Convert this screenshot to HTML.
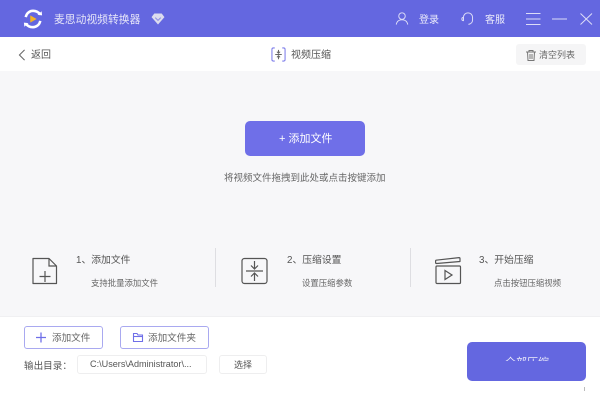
<!DOCTYPE html>
<html><head><meta charset="utf-8">
<style>
html,body{margin:0;padding:0}
body{width:600px;height:405px;overflow:hidden;position:relative;background:#fff;font-family:"Liberation Sans","Noto Sans CJK SC",sans-serif;color:#555}
#w{position:absolute;left:0;top:0;width:600px;height:405px;filter:blur(.3px)}
.t{position:absolute;white-space:nowrap;line-height:14px}
.a{position:absolute;box-sizing:border-box}
svg{position:absolute;overflow:visible}
</style></head><body><div id="w">
<div class="a" style="left:0;top:0;width:600px;height:37px;background:#6467e0"></div>
<div class="a" style="left:0;top:71px;width:600px;height:246px;background:#f7f7f9"></div>
<div class="a" style="left:0;top:316px;width:600px;height:1px;background:#f0f0f2"></div>

<svg style="left:23px;top:8px" width="20" height="22" viewBox="0 0 22 24" fill="none">
<path d="M3 10 C4 5 8 3 11 3 C14 3 17 4.500 19 7" stroke="#fff" stroke-width="2.800"/>
<path d="M19 14 C18 19 14 21 11 21 C8 21 5 20 3 17" stroke="#fff" stroke-width="2.800"/>
<path d="M16 7.500 L21 8 L20.500 3.500Z M6 16.500 L1 16 L1.500 20.500Z" fill="#fff"/>
<path d="M8 8 L15 12 L8 16Z" fill="#f5b324"/>
</svg>
<div class="t" style="left:54px;top:13px;font-size:10.800px;color:#e6e6f8">麦思动视频转换器</div>
<svg style="left:151px;top:13px" width="14" height="12" viewBox="0 0 15 13"><path d="M3.500 0.500H11.500L14.500 4.500L7.500 12.500L0.500 4.500Z" fill="#dcdcee"/><path d="M4.500 5L7.500 8L10.500 5" stroke="#8f90e4" stroke-width="1.200" fill="none"/></svg>

<svg style="left:395px;top:12px" width="14" height="13" viewBox="0 0 17 16" fill="none" stroke="#dcdcf7" stroke-width="1.200"><circle cx="8.500" cy="5" r="4"/><path d="M1.500 15.500C2 11.500 5 9.500 8.500 9.500C12 9.500 15 11.500 15.500 15.500"/></svg>
<div class="t" style="left:419px;top:14px;font-size:10px;color:#ebebfa">登录</div>
<svg style="left:461px;top:12px" width="14" height="14" viewBox="0 0 17 17" fill="none" stroke="#dcdcf7" stroke-width="1.200"><path d="M3 9V6.500C3 3.500 5.500 1 8.500 1C11.500 1 14 3.500 14 6.500V10C14 12.500 12 14.500 9 15"/><path d="M3 6.500C1.500 6.500 1 7.500 1 8.500C1 9.500 1.500 10.500 3 10.500Z"/></svg>
<div class="t" style="left:485px;top:14px;font-size:10px;color:#ebebfa">客服</div>
<svg style="left:526px;top:13px" width="66" height="12" viewBox="0 0 66 12" fill="none" stroke="#dcdcf7" stroke-width="1"><path d="M0 .5H14.500M0 6H14.500M0 11.500H14.500"/><path d="M26 6H41"/><path d="M54.500 .5L66 11.500M66 .5L54.500 11.500"/></svg>

<svg style="left:18px;top:49px" width="8" height="12" viewBox="0 0 9 14" fill="none" stroke="#666" stroke-width="1.200"><path d="M7.500 1L1.500 7L7.500 13"/></svg>
<div class="t" style="left:31px;top:49px;font-size:10px;color:#555">返回</div>

<svg style="left:271px;top:47px" width="15" height="15" viewBox="0 0 15 16" fill="none" stroke="#7c7cea" stroke-width="1.100"><path d="M3.500 1H2C1 1 .5 1.500 .5 2.500V13.500C.5 14.500 1 15 2 15H3.500M11.500 1H13C14 1 14.500 1.500 14.500 2.500V13.500C14.500 14.500 14 15 13 15H11.500"/><path d="M4 8H11M7.500 3V6.500M7.500 13V9.500M5.800 5L7.500 6.700L9.200 5M5.800 11L7.500 9.300L9.200 11" stroke="#666"/></svg>
<div class="t" style="left:291px;top:49px;font-size:10px;color:#555">视频压缩</div>

<div class="a" style="left:516px;top:44px;width:70px;height:21px;background:#f5f5f6;border-radius:3px"></div>
<svg style="left:526px;top:50px" width="10" height="11" viewBox="0 0 10 11" fill="none" stroke="#777" stroke-width="1"><path d="M0 2H10M3 2V.5H7V2M1.500 2L2 10.500H8L8.500 2M4 4V9M6 4V9"/></svg>
<div class="t" style="left:539px;top:48px;font-size:9px;color:#666">清空列表</div>

<div class="a" style="left:245px;top:121px;width:120px;height:35px;background:#6f6fe8;border-radius:5px"></div>
<div class="t" style="left:279px;top:132px;font-size:11px;color:#fff">+ 添加文件</div>
<div class="t" style="left:224px;top:172px;font-size:9.500px;color:#666">将视频文件拖拽到此处或点击按键添加</div>

<svg style="left:32px;top:257px" width="26" height="28" viewBox="0 0 26 28" fill="none" stroke="#555" stroke-width="1.200"><path d="M1 1.500H17L24.500 9V26.500H1Z" stroke-linejoin="round"/><path d="M17 1.500V9H24.500"/><path d="M13 14V25M7.500 19.500H18.500"/></svg>
<div class="t" style="left:76px;top:254px;font-size:9.800px;color:#555">1、添加文件</div>
<div class="t" style="left:91px;top:276px;font-size:8.400px;color:#666">支持批量添加文件</div>

<div class="a" style="left:215px;top:248px;width:1px;height:39px;background:#dedee2"></div>
<svg style="left:241px;top:257px" width="28" height="28" viewBox="0 0 28 28" fill="none" stroke="#555" stroke-width="1.200"><rect x="1" y="1.500" width="25" height="25" rx="2.500"/><path d="M5 14H22M13.500 4V11.500M13.500 24V16.500M10 8.500L13.500 12L17 8.500M10 19.500L13.500 16L17 19.500"/></svg>
<div class="t" style="left:287px;top:254px;font-size:9.800px;color:#555">2、压缩设置</div>
<div class="t" style="left:302px;top:276px;font-size:8.400px;color:#666">设置压缩参数</div>

<div class="a" style="left:410px;top:248px;width:1px;height:39px;background:#dedee2"></div>
<svg style="left:435px;top:257px" width="26" height="27" viewBox="0 0 26 27" fill="none" stroke="#555" stroke-width="1.200"><path d="M1 3.200L24 .6C24.800 .6 25 1 25 1.600V4.500L1.600 6.500C.9 6.500 .6 6.200 .6 5.500V3.800Z" stroke-linejoin="round"/><rect x="1" y="9" width="24.500" height="17.500" rx="1"/><path d="M10 13.500L17 18L10 22.500Z"/></svg>
<div class="t" style="left:479px;top:254px;font-size:9.800px;color:#555">3、开始压缩</div>
<div class="t" style="left:494px;top:276px;font-size:8.400px;color:#666">点击按钮压缩视频</div>

<div class="a" style="left:24px;top:326px;width:79px;height:23px;border:1px solid #a9a9f0;border-radius:3px;background:#fff"></div>
<svg style="left:36px;top:332px" width="10" height="11" viewBox="0 0 10 11" fill="none" stroke="#6f6fe8" stroke-width="1.300"><path d="M5 0.500V10.500M0 5.500H10"/></svg>
<div class="t" style="left:52px;top:332px;font-size:9.600px;color:#666">添加文件</div>
<div class="a" style="left:120px;top:326px;width:89px;height:23px;border:1px solid #a9a9f0;border-radius:3px;background:#fff"></div>
<svg style="left:133px;top:333px" width="10" height="9" viewBox="0 0 10 9" fill="none" stroke="#6f6fe8" stroke-width="1.100"><path d="M.5 .5H4L5 2H9.500V8.500H.5Z"/><path d="M.5 3.500H9.500"/></svg>
<div class="t" style="left:148px;top:332px;font-size:9.600px;color:#666">添加文件夹</div>

<div class="t" style="left:24px;top:359.500px;font-size:9.600px;color:#555">输出目录：</div>
<div class="a" style="left:77px;top:355px;width:130px;height:19px;border:1px solid #eeeeef;border-radius:3px;background:#fff"></div>
<div class="t" style="left:90px;top:357px;font-size:9.100px;color:#555">C:\Users\Administrator\...</div>
<div class="a" style="left:219px;top:355px;width:48px;height:19px;border:1px solid #eeeeef;border-radius:3px;background:#fff"></div>
<div class="t" style="left:234px;top:358px;font-size:9px;color:#555">选择</div>

<div class="a" style="left:467px;top:342px;width:119px;height:39px;background:#6467e0;border-radius:5px"></div>
<div class="a" style="left:467px;top:356px;width:119px;height:5px;overflow:hidden">
<div class="t" style="left:38px;top:0;font-size:11px;color:#ebebfa">全部压缩</div></div>
<div class="a" style="left:584px;top:387px;width:1px;height:4px;background:#bbb"></div>
</div></body></html>
